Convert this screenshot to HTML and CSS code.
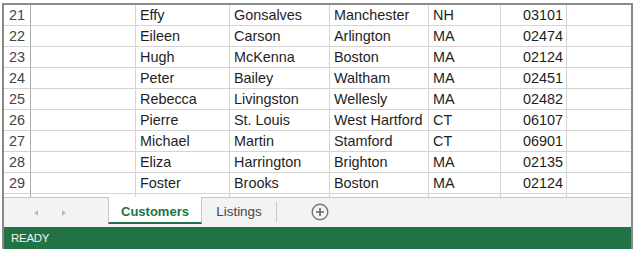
FILE: index.html
```html
<!DOCTYPE html>
<html lang="en">

<head>
    <meta charset="UTF-8">
    <meta name="viewport" content="width=device-width, initial-scale=1.0">
    <title>Customers</title>
    <link rel="stylesheet" href="styles.css">
</head>

<body>
    <div class="window">
        <div class="sheet">
            <div class="row"><div class="hdr">21</div><div></div><div>Effy</div><div>Gonsalves</div><div>Manchester</div><div>NH</div><div class="num">03101</div><div></div></div>
            <div class="row"><div class="hdr">22</div><div></div><div>Eileen</div><div>Carson</div><div>Arlington</div><div>MA</div><div class="num">02474</div><div></div></div>
            <div class="row"><div class="hdr">23</div><div></div><div>Hugh</div><div>McKenna</div><div>Boston</div><div>MA</div><div class="num">02124</div><div></div></div>
            <div class="row"><div class="hdr">24</div><div></div><div>Peter</div><div>Bailey</div><div>Waltham</div><div>MA</div><div class="num">02451</div><div></div></div>
            <div class="row"><div class="hdr">25</div><div></div><div>Rebecca</div><div>Livingston</div><div>Wellesly</div><div>MA</div><div class="num">02482</div><div></div></div>
            <div class="row"><div class="hdr">26</div><div></div><div>Pierre</div><div>St. Louis</div><div>West Hartford</div><div>CT</div><div class="num">06107</div><div></div></div>
            <div class="row"><div class="hdr">27</div><div></div><div>Michael</div><div>Martin</div><div>Stamford</div><div>CT</div><div class="num">06901</div><div></div></div>
            <div class="row"><div class="hdr">28</div><div></div><div>Eliza</div><div>Harrington</div><div>Brighton</div><div>MA</div><div class="num">02135</div><div></div></div>
            <div class="row"><div class="hdr">29</div><div></div><div>Foster</div><div>Brooks</div><div>Boston</div><div>MA</div><div class="num">02124</div><div></div></div>
            <!-- ligne 30 à peine visible, sans texte -->
            <div class="row"><div class="hdr"></div><div></div><div></div><div></div><div></div><div></div><div></div><div></div></div>
        </div>

        <div class="tabbar">
            <div class="tab_nav">
                <span class="arrow left"></span>
                <span class="arrow right"></span>
            </div>
            <div class="tab active">Customers</div>
            <div class="tab">Listings</div>
            <span class="tab_sep"></span>
            <div class="add_sheet">
                <svg width="18" height="18" viewBox="0 0 18 18">
                    <circle cx="9" cy="9" r="7.8" fill="none" stroke="#777" stroke-width="1.4" />
                    <path d="M9 5v8M5 9h8" stroke="#666" stroke-width="1.6" />
                </svg>
            </div>
        </div>

        <div class="status">READY</div>
    </div>
</body>

</html>
```

FILE: styles.css
```css
* {
    box-sizing: border-box;
    margin: 0;
    padding: 0;
}

body {
    background: #fff;
    font-family: 'Liberation Sans', Arial, sans-serif;
}

.window {
    margin: 3px 0 0 2px;
    width: 631px;
    border: 2px solid #8a8a8a;
    border-bottom: none;
}

/* grille */
.sheet {
    height: 192px;
    overflow: hidden;
    background: #fff;
}

.row {
    display: grid;
    grid-template-columns: 27px 105px 94px 100px 99px 72px 66px 64px;
    height: 21px;
}

.row div {
    border-right: 1px solid #d4d4d4;
    border-bottom: 1px solid #d4d4d4;
    padding: 0 4px;
    line-height: 20px;
    font-size: 14.4px;
    color: #1e1e1e;
    white-space: nowrap;
    overflow: hidden;
}

.row div:last-child {
    border-right: none;
}

.row .hdr {
    text-align: center;
    padding: 0;
    color: #444;
    border-right-color: #ababab;
}

.row .num {
    text-align: right;
    padding-right: 3px;
}

/* onglets */
.tabbar {
    display: flex;
    height: 30px;
    border-top: 1px solid #c6c6c6;
    background: #f3f3f3;
}

.tab_nav {
    width: 104px;
    display: flex;
    align-items: center;
    padding-left: 30px;
    gap: 24px;
}

.arrow {
    width: 0;
    height: 0;
    border-top: 3.5px solid transparent;
    border-bottom: 3.5px solid transparent;
}

.arrow.left {
    border-right: 4px solid #bcbcbc;
}

.arrow.right {
    border-left: 4px solid #bcbcbc;
}

.tab {
    height: 26px;
    padding-top: 6px;
    font-size: 13.4px;
    text-align: center;
    color: #444;
    border-right: 1px solid #c6c6c6;
}

.tab.active {
    width: 94px;
    margin-top: -1px;
    height: 27px;
    padding-top: 7px;
    background: #fff;
    color: #217346;
    font-weight: bold;
    font-size: 13px;
    border-left: 1px solid #c6c6c6;
    border-bottom: 2px solid #217346;
}

.tab:not(.active) {
    width: 74px;
    border-right: none;
}

.tab_sep {
    width: 1px;
    height: 20px;
    margin-top: 4px;
    background: #c6c6c6;
}

.add_sheet {
    margin-left: 34px;
    padding-top: 5px;
}

/* barre d'état */
.status {
    height: 22px;
    background: #217346;
    color: #eef5f0;
    font-size: 11.5px;
    line-height: 22px;
    padding-left: 7px;
    letter-spacing: -0.3px;
}
```
